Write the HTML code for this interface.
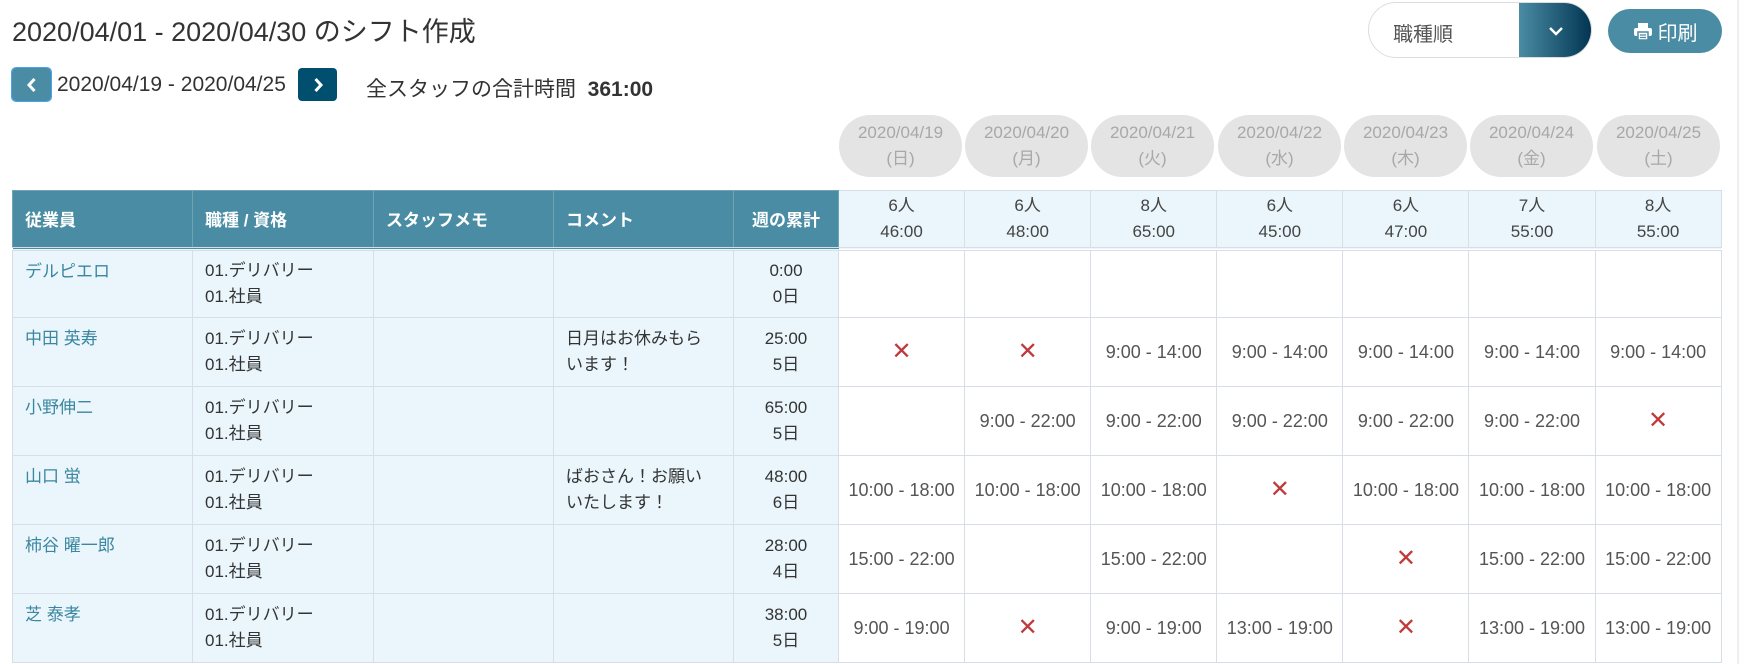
<!DOCTYPE html>
<html><head><meta charset="utf-8"><style>
*{box-sizing:border-box;margin:0;padding:0}
body{width:1747px;height:664px;overflow:hidden;background:#fff;font-family:"Liberation Sans","Noto Sans CJK JP",sans-serif;color:#333;position:relative}
.abs{position:absolute}
h1{position:absolute;left:12px;top:10px;font-size:27px;font-weight:normal;color:#333;white-space:nowrap}
.nb{position:absolute;top:68px;width:39px;height:33px;border-radius:4px;color:#fff;display:flex;align-items:center;justify-content:center}
.pill{position:absolute;top:115px;height:62px;width:123px;border-radius:31px;background:#e4e4e4;color:#a8a8a8;font-size:17px;text-align:center;line-height:26px;padding-top:5px}
table{position:absolute;left:12px;top:190px;border-collapse:collapse;table-layout:fixed;width:1709px;font-size:17px}
td,th{border:1px solid #d9dde6}
th{background:#4a8ca3;color:#fff;font-weight:bold;text-align:left;padding-left:12px;height:58px;border-color:#6ea4b6;font-size:17px}
th.c{text-align:center;padding-left:0}
th.d{background:#eaf6fb;color:#444;font-weight:normal;text-align:center;padding:0;line-height:26px;border-color:#d9dde6}
td{height:69px;vertical-align:middle;line-height:26px}
td.l{background:#eaf6fb;padding-left:12px}
td.n{color:#3b86a0;vertical-align:top;padding-top:8px}
td.cm{vertical-align:top;padding-top:8px}
td.s{background:#eaf6fb;text-align:center}
td.t{text-align:center;color:#555;font-size:18px}
td.x{color:#c0393b;font-size:24px}
tr.gap td{border-top:4px double #d9dde6}
</style></head><body>
<h1>2020/04/01 - 2020/04/30 のシフト作成</h1>
<div class="nb" style="left:12px;background:#4a8ca3;outline:1px solid #4aa3f0"><svg width="14" height="18" viewBox="0 0 14 18"><path d="M9.5 3L4 9l5.5 6" stroke="#fff" stroke-width="3" fill="none"/></svg></div>
<div class="abs" style="left:57px;top:73px;font-size:21px">2020/04/19 - 2020/04/25</div>
<div class="nb" style="left:298px;background:#004f6e"><svg width="14" height="18" viewBox="0 0 14 18"><path d="M4.5 3l5.5 6-5.5 6" stroke="#fff" stroke-width="3" fill="none"/></svg></div>
<div class="abs" style="left:366px;top:73px;font-size:21px">全スタッフの合計時間&nbsp;&nbsp;<b>361:00</b></div>

<div class="abs" style="left:1368px;top:2px;width:224px;height:56px;border:1px solid #ddd;border-radius:28px;overflow:hidden;background:#fff">
<div class="abs" style="left:24px;top:15px;font-size:20px;color:#555">職種順</div>
<div class="abs" style="left:150px;top:0;width:74px;height:56px;background:linear-gradient(90deg,#4a8ca3,#003350);display:flex;align-items:center;justify-content:center"><svg width="18" height="12" viewBox="0 0 18 12"><path d="M3 3l6 6 6-6" stroke="#fff" stroke-width="2.4" fill="none"/></svg></div>
</div>
<div class="abs" style="left:1608px;top:9px;width:114px;height:44px;border-radius:22px;background:#4a8ca3;color:#fff;font-size:20px;display:flex;align-items:center;justify-content:center;gap:5px">
<svg width="20" height="20" viewBox="0 0 20 20"><rect x="5" y="2" width="10" height="5" fill="#fff"/><rect x="1" y="7" width="18" height="8" rx="2" fill="#fff"/><rect x="5" y="11" width="10" height="8" fill="#fff" stroke="#4a8ca3" stroke-width="1.5"/><path d="M7 14h6M7 16.5h6" stroke="#4a8ca3" stroke-width="1.2"/></svg>印刷</div>
<div class="abs" style="left:1737px;top:0;width:2px;height:664px;background:#eee"></div>

<div class="pill" style="left:839px">2020/04/19<br>(日)</div>
<div class="pill" style="left:965px">2020/04/20<br>(月)</div>
<div class="pill" style="left:1091px">2020/04/21<br>(火)</div>
<div class="pill" style="left:1218px">2020/04/22<br>(水)</div>
<div class="pill" style="left:1344px">2020/04/23<br>(木)</div>
<div class="pill" style="left:1470px">2020/04/24<br>(金)</div>
<div class="pill" style="left:1597px">2020/04/25<br>(土)</div>

<table>
<colgroup><col style="width:180px"><col style="width:181px"><col style="width:180px"><col style="width:180px"><col style="width:105px"><col span="7" style="width:126.1px"></colgroup>
<tr><th>従業員</th><th>職種 / 資格</th><th>スタッフメモ</th><th>コメント</th><th class="c">週の累計</th>
<th class="d">6人<br>46:00</th><th class="d">6人<br>48:00</th><th class="d">8人<br>65:00</th><th class="d">6人<br>45:00</th><th class="d">6人<br>47:00</th><th class="d">7人<br>55:00</th><th class="d">8人<br>55:00</th></tr>
<tr class="gap"><td class="l n">デルピエロ</td><td class="l">01.デリバリー<br>01.社員</td><td class="l"></td><td class="l cm"></td><td class="s">0:00<br>0日</td><td></td><td></td><td></td><td></td><td></td><td></td><td></td></tr>
<tr><td class="l n">中田 英寿</td><td class="l">01.デリバリー<br>01.社員</td><td class="l"></td><td class="l cm">日月はお休みもら<br>います！</td><td class="s">25:00<br>5日</td><td class="t x">✕</td><td class="t x">✕</td><td class="t">9:00 - 14:00</td><td class="t">9:00 - 14:00</td><td class="t">9:00 - 14:00</td><td class="t">9:00 - 14:00</td><td class="t">9:00 - 14:00</td></tr>
<tr><td class="l n">小野伸二</td><td class="l">01.デリバリー<br>01.社員</td><td class="l"></td><td class="l cm"></td><td class="s">65:00<br>5日</td><td></td><td class="t">9:00 - 22:00</td><td class="t">9:00 - 22:00</td><td class="t">9:00 - 22:00</td><td class="t">9:00 - 22:00</td><td class="t">9:00 - 22:00</td><td class="t x">✕</td></tr>
<tr><td class="l n">山口 蛍</td><td class="l">01.デリバリー<br>01.社員</td><td class="l"></td><td class="l cm">ばおさん！お願い<br>いたします！</td><td class="s">48:00<br>6日</td><td class="t">10:00 - 18:00</td><td class="t">10:00 - 18:00</td><td class="t">10:00 - 18:00</td><td class="t x">✕</td><td class="t">10:00 - 18:00</td><td class="t">10:00 - 18:00</td><td class="t">10:00 - 18:00</td></tr>
<tr><td class="l n">柿谷 曜一郎</td><td class="l">01.デリバリー<br>01.社員</td><td class="l"></td><td class="l cm"></td><td class="s">28:00<br>4日</td><td class="t">15:00 - 22:00</td><td></td><td class="t">15:00 - 22:00</td><td></td><td class="t x">✕</td><td class="t">15:00 - 22:00</td><td class="t">15:00 - 22:00</td></tr>
<tr><td class="l n">芝 泰孝</td><td class="l">01.デリバリー<br>01.社員</td><td class="l"></td><td class="l cm"></td><td class="s">38:00<br>5日</td><td class="t">9:00 - 19:00</td><td class="t x">✕</td><td class="t">9:00 - 19:00</td><td class="t">13:00 - 19:00</td><td class="t x">✕</td><td class="t">13:00 - 19:00</td><td class="t">13:00 - 19:00</td></tr>
</table>
</body></html>
